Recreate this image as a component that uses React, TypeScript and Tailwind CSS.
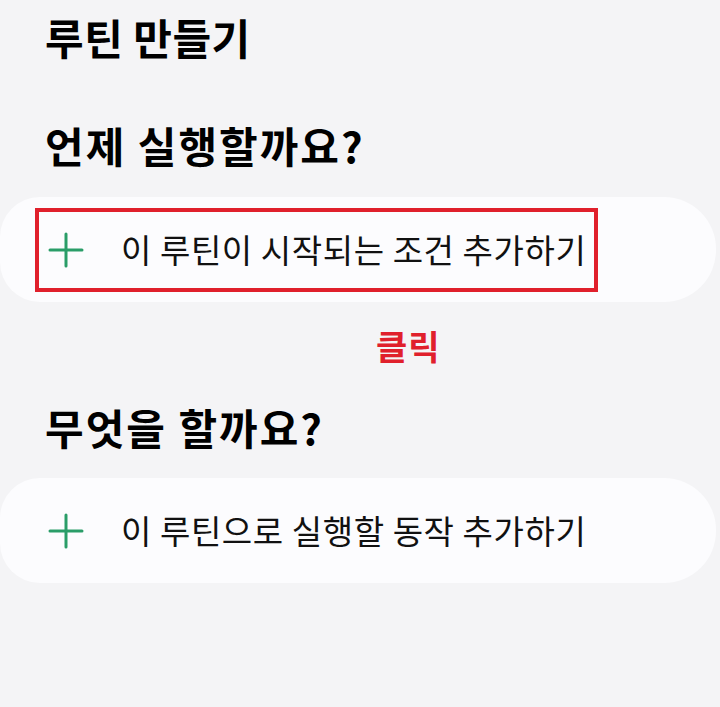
import React from "react";

const PlusIcon: React.FC = () => (
  <svg width="36" height="36" viewBox="0 0 36 36" className="shrink-0">
    <path d="M18 2v32M2 18h32" stroke="#2a9d68" strokeWidth="3" strokeLinecap="round" fill="none" />
  </svg>
);

const AddRow: React.FC<{ label: string; highlight?: boolean }> = ({ label, highlight }) => (
  <div className="w-[716px] h-[105px] bg-[#fcfcfe] rounded-r-[52px] rounded-l-[40px] flex items-center pl-[35px]">
    <div
      className={`h-[84px] w-[563px] flex items-center gap-[37px] pl-[9px] ${
        highlight ? "border-[4px] border-[#e0202c]" : "border-[4px] border-transparent"
      }`}
    >
      <PlusIcon />
      <span className="text-[33px] text-[#111] leading-none tracking-[0.6px]">{label}</span>
    </div>
  </div>
);

export default function App() {
  return (
    <div
      className="w-[720px] h-[707px] bg-[#f4f4f6] overflow-hidden"
      style={{ fontFamily: '"Noto Sans CJK KR", "Noto Sans", sans-serif' }}
    >
      <h1 className="pl-[45px] pt-[12px] text-[42px] font-bold leading-[50px] tracking-[0.5px] text-black">루틴 만들기</h1>
      <h2 className="pl-[45px] mt-[58px] text-[42px] font-bold leading-[50px] tracking-[2px] text-black">언제 실행할까요?</h2>
      <div className="mt-[27px]">
        <AddRow label="이 루틴이 시작되는 조건 추가하기" highlight />
      </div>
      <div className="mt-[24px] pl-[376px] text-[34px] font-bold leading-[40px] tracking-[1px] text-[#e0202c]">클릭</div>
      <h2 className="pl-[45px] mt-[36px] text-[42px] font-bold leading-[50px] tracking-[2px] text-black">무엇을 할까요?</h2>
      <div className="mt-[26px]">
        <AddRow label="이 루틴으로 실행할 동작 추가하기" />
      </div>
    </div>
  );
}
